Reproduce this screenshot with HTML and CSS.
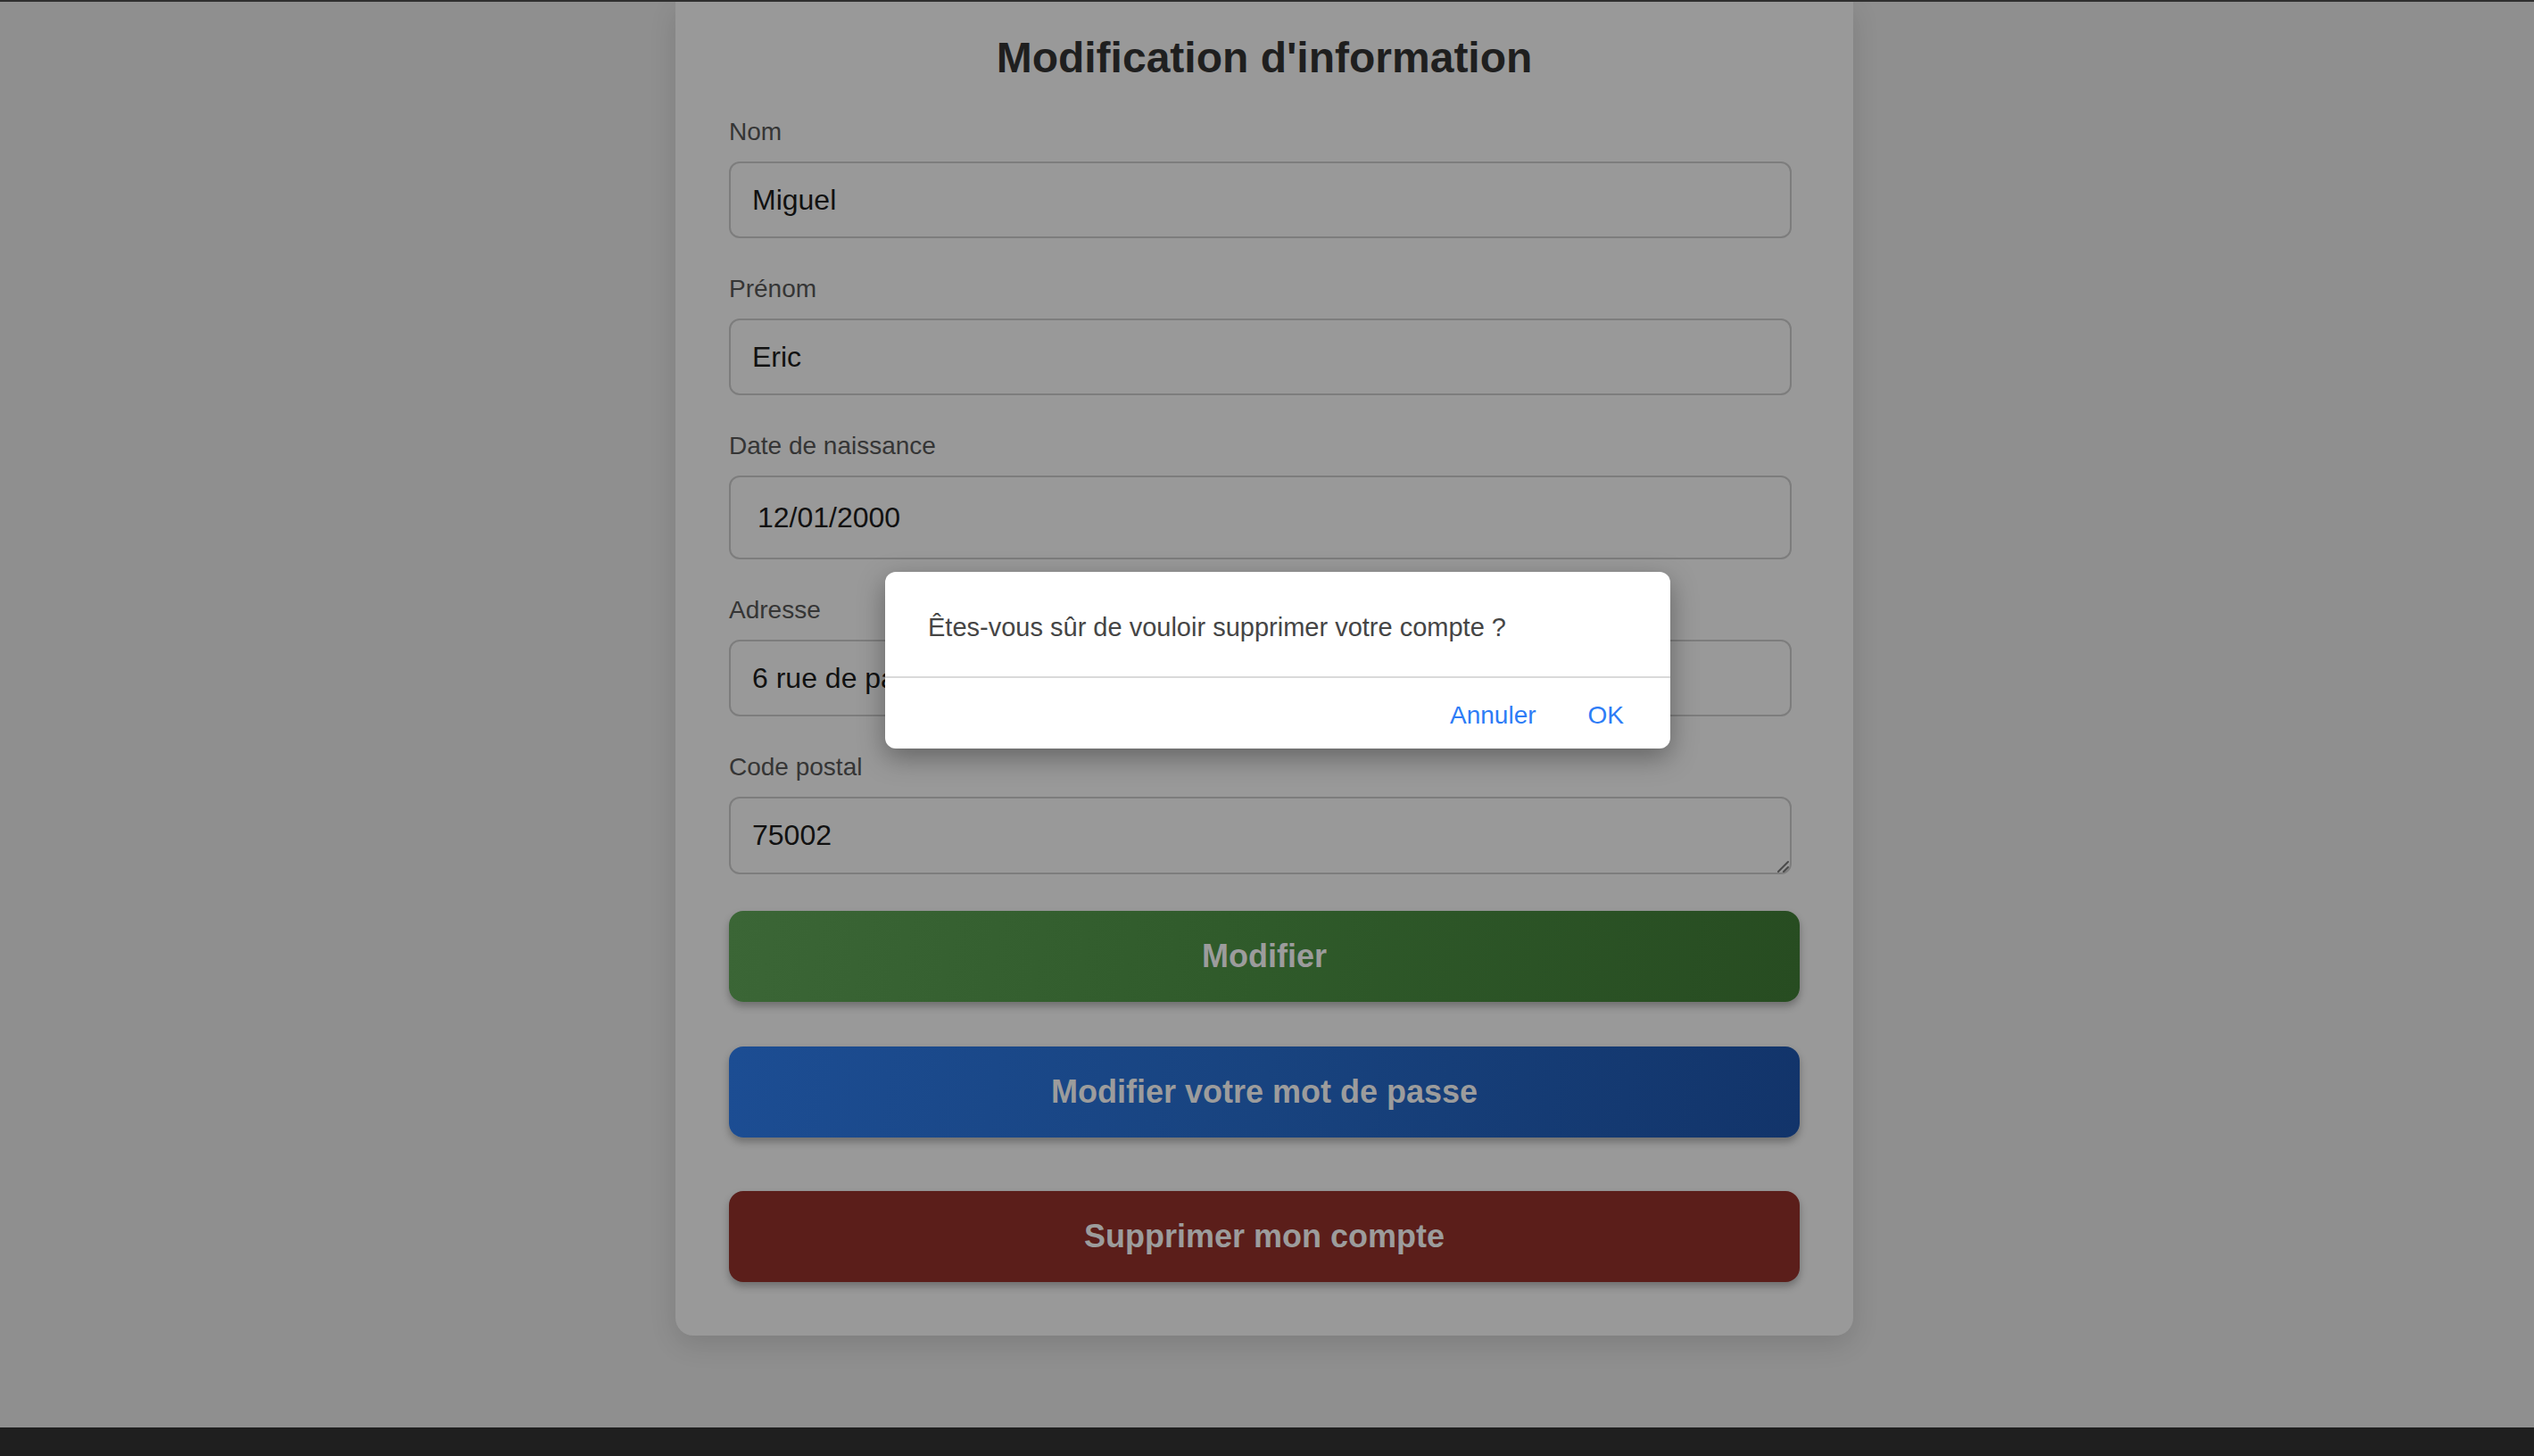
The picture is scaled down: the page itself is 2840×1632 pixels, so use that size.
FILE: index.html
```html
<!DOCTYPE html>
<html lang="fr">
<head>
<meta charset="utf-8">
<title>Modification d'information</title>
<link rel="stylesheet" href="styles.css">
</head>
<body>
<div class="topline"></div>
<main class="page">
  <form class="card">
    <h1 class="title">Modification d'information</h1>
    <div class="field">
      <label class="label">Nom</label>
      <input class="input" type="text" value="Miguel">
    </div>
    <div class="field">
      <label class="label">Prénom</label>
      <input class="input" type="text" value="Eric">
    </div>
    <div class="field">
      <label class="label">Date de naissance</label>
      <input class="input input-date" type="text" value="12/01/2000">
    </div>
    <div class="field">
      <label class="label">Adresse</label>
      <input class="input" type="text" value="6 rue de paris">
    </div>
    <div class="field">
      <label class="label">Code postal</label>
      <div class="textarea-wrap">
        <textarea class="input textarea">75002</textarea>
        <svg class="grip" width="14" height="14" viewBox="0 0 14 14"><path d="M13 2 L2 13 M13 8 L8 13" stroke="#4a4a4a" stroke-width="2" fill="none" stroke-linecap="round"/></svg>
      </div>
    </div>
    <div class="actions">
      <button type="button" class="btn btn-green">Modifier</button>
      <button type="button" class="btn btn-blue">Modifier votre mot de passe</button>
      <button type="button" class="btn btn-red">Supprimer mon compte</button>
    </div>
  </form>
</main>
<div class="bottombar"></div>

<div class="dialog">
  <div class="dialog-msg">Êtes-vous sûr de vouloir supprimer votre compte ?</div>
  <div class="dialog-actions">
    <span class="dialog-btn">Annuler</span>
    <span class="dialog-btn">OK</span>
  </div>
</div>
</body>
</html>
```

FILE: styles.css
```css
* { box-sizing: border-box; }
html, body { margin: 0; padding: 0; }
body {
  width: 2840px;
  height: 1632px;
  background: #8f8f8f;
  font-family: "Liberation Sans", Arial, sans-serif;
  display: flex;
  flex-direction: column;
  overflow: hidden;
}
.topline {
  height: 2px;
  background: #2f2f2f;
  flex: none;
  position: relative;
  z-index: 2;
}
.page {
  flex: 1;
  display: flex;
  justify-content: center;
  padding-right: 6px;
}
.card {
  width: 1320px;
  align-self: flex-start;
  background: #999999;
  border-radius: 0 0 20px 20px;
  box-shadow: 0 10px 30px rgba(0,0,0,0.12);
  padding: 35px 60px 60px 60px;
  display: flex;
  flex-direction: column;
}
.title {
  margin: 0 0 38px 0;
  text-align: center;
  font-size: 48px;
  line-height: 56px;
  font-weight: 700;
  color: #1f1f1f;
}
.field {
  display: flex;
  flex-direction: column;
  gap: 16px;
  margin-bottom: 40px;
}
.label {
  font-size: 28px;
  line-height: 34px;
  color: #353535;
}
.input {
  width: calc(100% - 9px);
  height: 86px;
  border: 2px solid #7d7d7d;
  border-radius: 12px;
  background: transparent;
  padding: 0 24px;
  font-family: "Liberation Sans", Arial, sans-serif;
  font-size: 32px;
  color: #111;
  outline: none;
}
.input-date {
  height: 94px;
  padding-left: 30px;
}
.textarea-wrap {
  position: relative;
}
.textarea {
  display: block;
  height: 87px;
  padding-top: 22px;
  line-height: 38px;
  resize: none;
}
.grip {
  position: absolute;
  right: 12px;
  bottom: 2px;
}
.actions {
  display: flex;
  flex-direction: column;
  gap: 50px;
  margin-top: 1px;
}
.btn {
  height: 102px;
  width: 100%;
  border: none;
  border-radius: 16px;
  font-family: "Liberation Sans", Arial, sans-serif;
  font-size: 36px;
  font-weight: 700;
  color: #9c9c9c;
  box-shadow: 0 5px 8px rgba(0,0,0,0.28);
  cursor: pointer;
}
.btn-green { background: linear-gradient(100deg, #3b6636 0%, #2f5a2a 50%, #274c21 100%); }
.btn-blue { background: linear-gradient(100deg, #1c4d93 0%, #18437f 50%, #12346a 100%); }
.btn-red { background: #5b1e1a; margin-top: 10px; }
.bottombar {
  height: 32px;
  flex: none;
  background: #1f1f1f;
}
.dialog {
  position: absolute;
  left: 992px;
  top: 641px;
  width: 880px;
  height: 198px;
  background: #ffffff;
  border-radius: 12px;
  box-shadow: 0 10px 30px rgba(0,0,0,0.35);
  display: flex;
  flex-direction: column;
  font-family: "Liberation Sans", Arial, sans-serif;
}
.dialog-msg {
  height: 119px;
  padding: 44px 30px 0 48px;
  font-size: 29px;
  line-height: 36px;
  color: #454545;
  border-bottom: 2px solid #dadada;
}
.dialog-actions {
  flex: 1;
  display: flex;
  justify-content: flex-end;
  align-items: center;
  gap: 58px;
  padding: 4px 52px 0 0;
}
.dialog-btn {
  font-size: 28px;
  color: #2d7cf6;
}
```
